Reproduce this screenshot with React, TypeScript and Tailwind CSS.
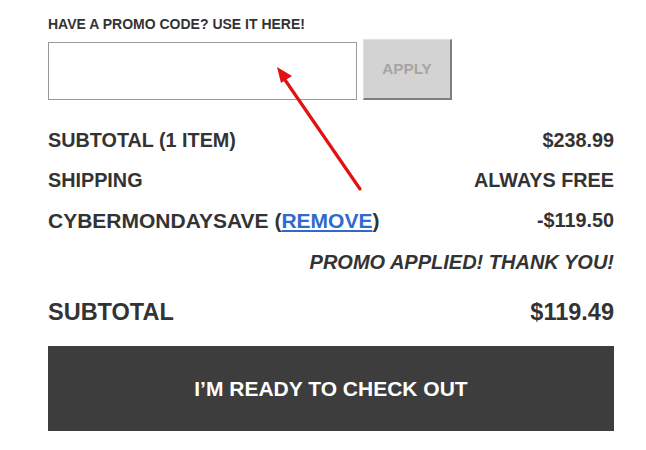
import React from "react";

export default function App() {
  return (
    <div
      className="relative w-[646px] h-[450px] bg-white text-[#333] overflow-hidden"
      style={{ fontFamily: '"Liberation Sans", Arial, sans-serif' }}
    >
      <div className="ml-12 w-[566px] pt-[14px]">
        <div className="h-5 leading-5 text-[14px] font-bold text-[#333]">
          HAVE A PROMO CODE? USE IT HERE!
        </div>
        <div className="mt-[5px] flex items-end gap-[6px]">
          <div className="w-[309px] h-[58px] border border-[#9a9a9a] bg-white" />
          <div className="w-[89px] h-[61px] bg-[#d3d3d3] border-t border-l border-[#e0e0e0] border-r-2 border-b-2 border-r-[#7f7f7f] border-b-[#7f7f7f] flex items-center justify-center text-[15.3px] font-bold text-[#a5a5a5]">
            APPLY
          </div>
        </div>

        <div className="mt-[21px] text-[19.8px] font-bold">
          <div className="h-10 flex items-center justify-between">
            <span>SUBTOTAL (1 ITEM)</span>
            <span>$238.99</span>
          </div>
          <div className="h-10 flex items-center justify-between">
            <span>SHIPPING</span>
            <span>ALWAYS FREE</span>
          </div>
          <div className="h-10 flex items-center justify-between">
            <span className="text-[21px]">
              CYBERMONDAYSAVE (
              <span className="text-[#2f6bcb] underline underline-offset-2">REMOVE</span>)
            </span>
            <span>-$119.50</span>
          </div>
          <div className="h-10 mt-px flex items-center justify-end italic text-[20px]">
            PROMO APPLIED! THANK YOU!
          </div>
        </div>

        <div className="mt-[11px] h-10 flex items-center justify-between text-[23.5px] font-bold">
          <span>SUBTOTAL</span>
          <span>$119.49</span>
        </div>

        <div className="mt-[13px] h-[85px] bg-[#3d3d3d] flex items-center justify-center text-white text-[21px] font-bold">
          I’M READY TO CHECK OUT
        </div>
      </div>

      <svg
        className="absolute left-0 top-0 pointer-events-none"
        width="646"
        height="450"
        viewBox="0 0 646 450"
      >
        <line x1="360" y1="189" x2="283" y2="77" stroke="#e31212" strokeWidth="3.2" strokeLinecap="round" />
        <polygon points="277,67 292,76 281,83" fill="#e31212" />
      </svg>
    </div>
  );
}
